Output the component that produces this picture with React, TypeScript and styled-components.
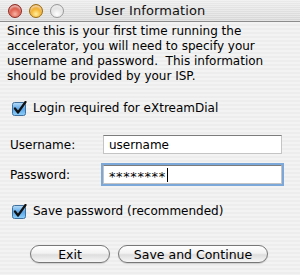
import React from 'react';
import styled, { createGlobalStyle } from 'styled-components';

const GlobalStyle = createGlobalStyle`
  html, body {
    margin: 0;
    padding: 0;
    background: #ececec;
  }
`;

const Window = styled.div`
  width: 300px;
  height: 275px;
  display: flex;
  flex-direction: column;
  font-family: "DejaVu Sans", "Liberation Sans", sans-serif;
  font-size: 12px;
  color: #000;
  background: repeating-linear-gradient(
    to bottom,
    #ededed 0px,
    #ededed 2px,
    #f3f3f3 2px,
    #f3f3f3 4px
  );
  overflow: hidden;
`;

const TitleBar = styled.div`
  height: 22px;
  flex: none;
  display: grid;
  grid-template-columns: 1fr auto 1fr;
  align-items: center;
  border-bottom: 1px solid #8c8c8c;
  background:
    repeating-linear-gradient(to bottom, rgba(255,255,255,0.35) 0 1px, rgba(0,0,0,0) 1px 2px),
    linear-gradient(to bottom, #ebebeb, #d6d6d6);
  box-sizing: border-box;
`;

const Lights = styled.div`
  display: flex;
  gap: 7px;
  padding-left: 8px;
  padding-top: 1px;
`;

const Light = styled.span<{ $tone: 'red' | 'yellow' | 'gray' }>`
  width: 14px;
  height: 14px;
  border-radius: 50%;
  box-sizing: border-box;
  border: 1px solid
    ${p => (p.$tone === 'red' ? '#8e2a22' : p.$tone === 'yellow' ? '#9a6a10' : '#9a9a9a')};
  background: ${p =>
    p.$tone === 'red'
      ? 'radial-gradient(circle at 50% 75%, #f6b4a6 0%, #e0614f 45%, #b63a2e 100%)'
      : p.$tone === 'yellow'
      ? 'radial-gradient(circle at 50% 75%, #fff0a0 0%, #f5b533 45%, #d0801a 100%)'
      : 'radial-gradient(circle at 50% 75%, #ffffff 0%, #e4e4e4 50%, #c4c4c4 100%)'};
  box-shadow: inset 0 2px 2px rgba(255, 255, 255, 0.6);
`;

const Title = styled.div`
  font-size: 13px;
  color: #111;
  letter-spacing: 0.1px;
`;

const Body = styled.div`
  flex: 1;
  display: flex;
  flex-direction: column;
  padding: 2px 7px 0 7px;
`;

const Message = styled.p`
  margin: 0;
  line-height: 15px;
  font-size: 12px;
`;

const CheckRow = styled.label<{ $top: number }>`
  display: flex;
  align-items: center;
  gap: 6px;
  margin-top: ${p => p.$top}px;
  padding-left: 5px;
  height: 16px;
`;

const FormGrid = styled.div`
  display: grid;
  grid-template-columns: 93px 179px;
  grid-auto-rows: 19px;
  row-gap: 11px;
  align-items: center;
  margin-top: 19px;
  padding-left: 3px;
`;

const FieldLabel = styled.span`
  font-size: 12px;
`;

const Input = styled.div<{ $focused?: boolean }>`
  height: 19px;
  box-sizing: border-box;
  background: #fff;
  display: flex;
  align-items: center;
  padding-left: 5px;
  font-size: 12px;
  border: 1px solid #c4c4c4;
  border-top-color: #7c7c7c;
  box-shadow: ${p => (p.$focused ? '0 0 0 2px #7ba7d9' : 'none')};
`;

const Secret = styled.span`
  font-size: 13px;
  letter-spacing: 0.6px;
  padding-top: 3px;
`;

const Caret = styled.span`
  display: inline-block;
  width: 1px;
  height: 14px;
  background: #000;
  margin-left: 1px;
`;

const ButtonRow = styled.div`
  display: flex;
  gap: 8px;
  padding-left: 23px;
  margin-top: 26px;
`;

const Button = styled.button<{ $w: number }>`
  width: ${p => p.$w}px;
  height: 18px;
  border-radius: 9px;
  border: 1px solid #777;
  background: linear-gradient(to bottom, #ffffff 0%, #f2f2f2 45%, #dedede 55%, #f6f6f6 100%);
  box-shadow: 0 1px 1px rgba(0, 0, 0, 0.15);
  font-family: "DejaVu Sans", "Liberation Sans", sans-serif;
  font-size: 12.5px;
  color: #000;
  padding: 0;
  display: flex;
  align-items: center;
  justify-content: center;
`;

const CheckBox = () => (
  <svg width="15" height="15" viewBox="0 0 15 15">
    <defs>
      <linearGradient id="cbg" x1="0" y1="0" x2="0" y2="1">
        <stop offset="0" stopColor="#b9dcf7" />
        <stop offset="0.5" stopColor="#5aa6e8" />
        <stop offset="1" stopColor="#8fd0fb" />
      </linearGradient>
    </defs>
    <rect x="0.5" y="1.5" width="13" height="13" rx="2" fill="url(#cbg)" stroke="#3f6f9c" />
    <path d="M3 7.5 L6 11.5 L13.5 1" fill="none" stroke="#111" strokeWidth="2.2" strokeLinecap="round" strokeLinejoin="round" />
  </svg>
);

export default function App() {
  return (
    <>
      <GlobalStyle />
      <Window>
        <TitleBar>
          <Lights>
            <Light $tone="red" />
            <Light $tone="yellow" />
            <Light $tone="gray" />
          </Lights>
          <Title>User Information</Title>
          <span />
        </TitleBar>
        <Body>
          <Message>
            Since this is your first time running the
            <br />
            accelerator, you will need to specify your
            <br />
            username and password.&nbsp; This information
            <br />
            should be provided by your ISP.
          </Message>
          <CheckRow $top={16}>
            <CheckBox />
            <span>Login required for eXtreamDial</span>
          </CheckRow>
          <FormGrid>
            <FieldLabel>Username:</FieldLabel>
            <Input>username</Input>
            <FieldLabel>Password:</FieldLabel>
            <Input $focused>
              <Secret>********</Secret>
              <Caret />
            </Input>
          </FormGrid>
          <CheckRow $top={19}>
            <CheckBox />
            <span>Save password (recommended)</span>
          </CheckRow>
          <ButtonRow>
            <Button $w={80}>Exit</Button>
            <Button $w={150}>Save and Continue</Button>
          </ButtonRow>
        </Body>
      </Window>
    </>
  );
}
